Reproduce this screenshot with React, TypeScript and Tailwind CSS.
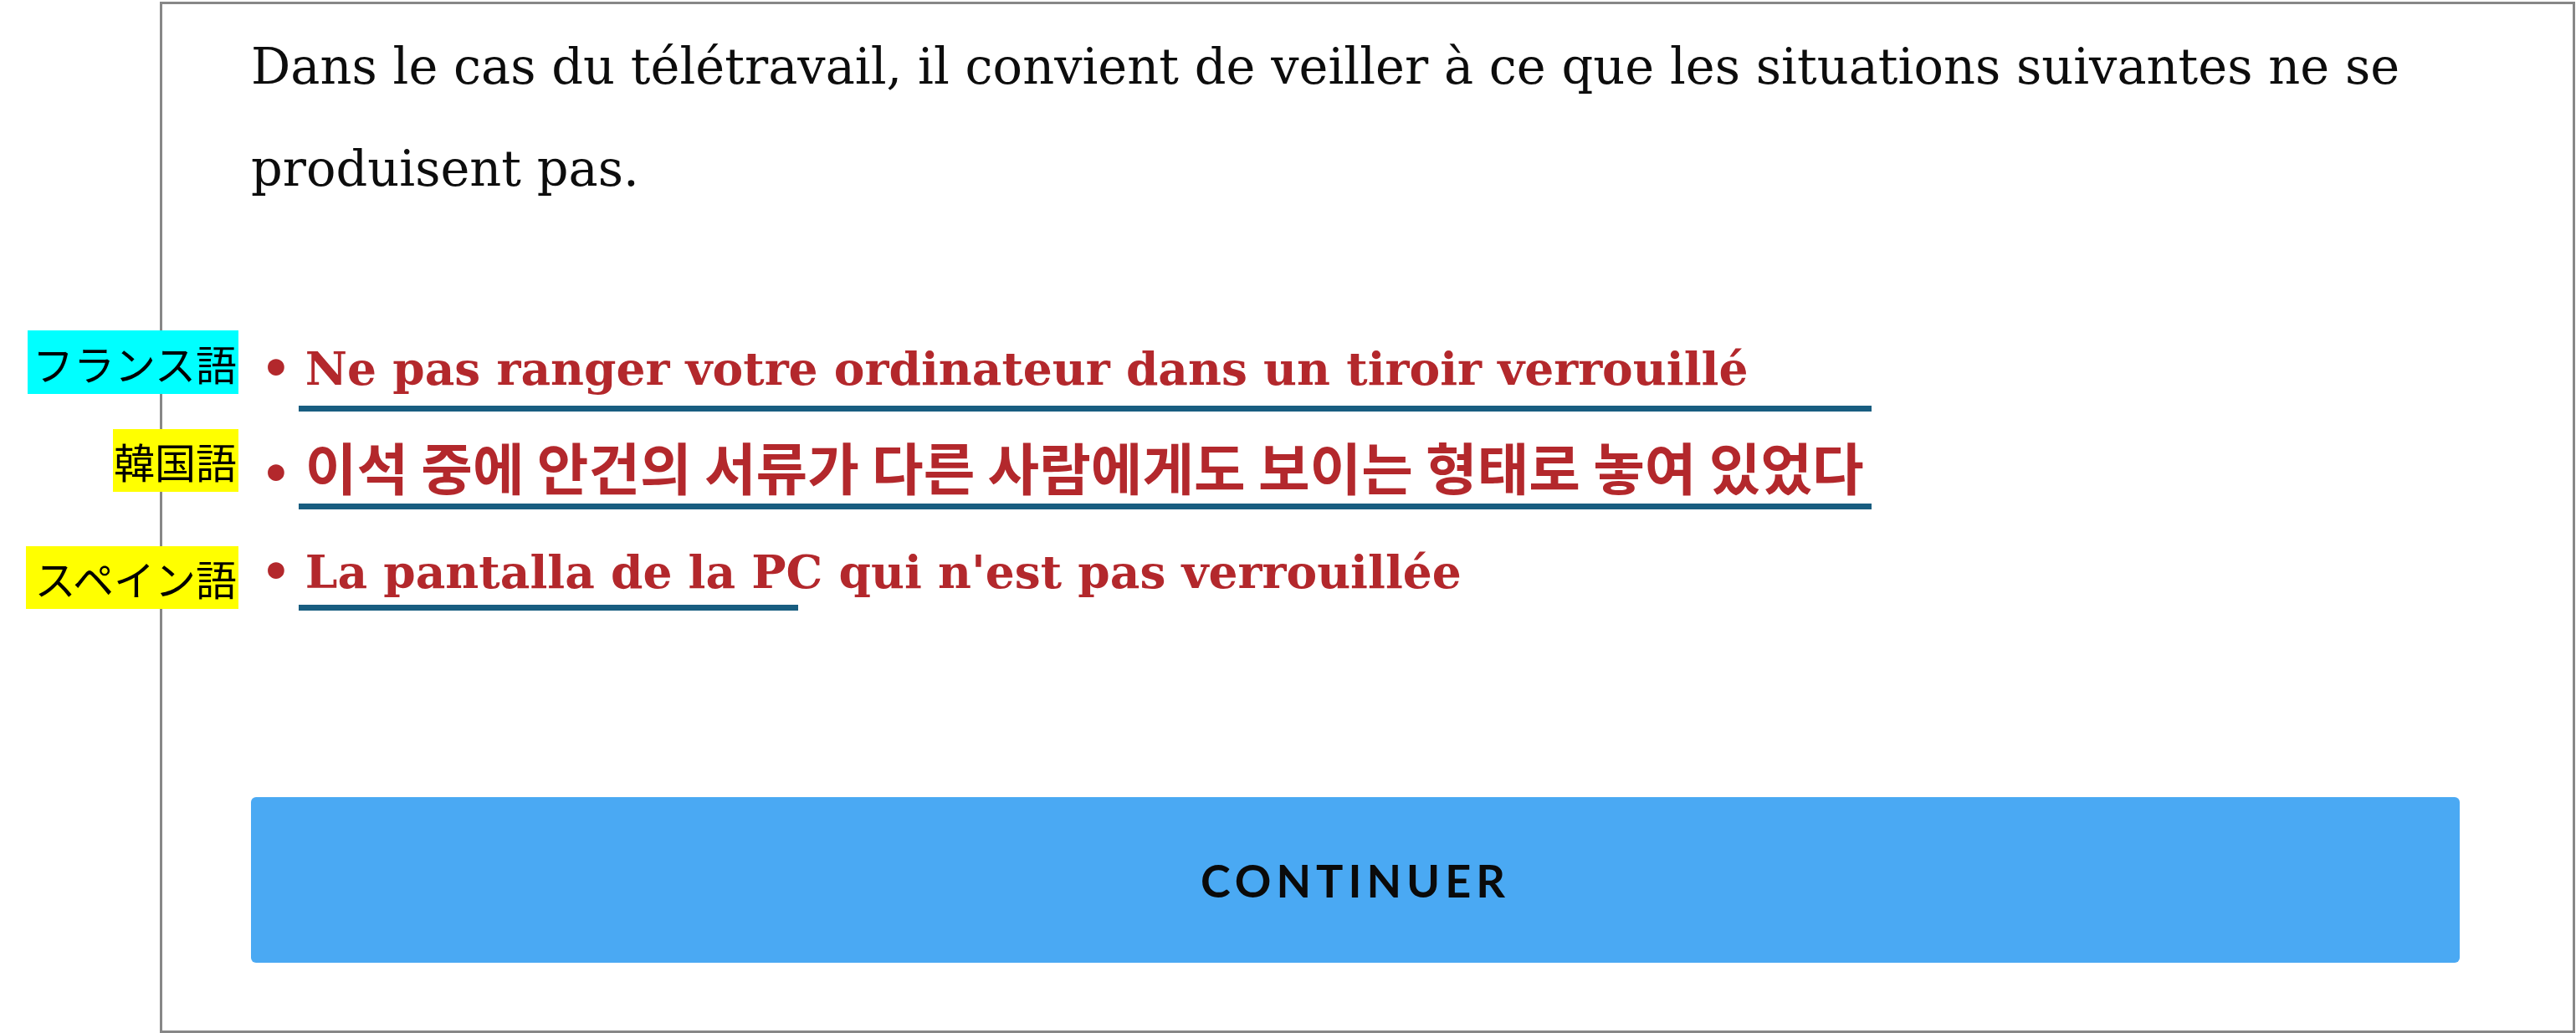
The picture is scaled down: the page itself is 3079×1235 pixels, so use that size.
import React from "react";

type Item = {
  text: string;
  lang: string;
  labelBg: string;
  labelClass: string;
  underlineClass: string;
  korean?: boolean;
  height: string;
};

const items: Item[] = [
  {
    text: "Ne pas ranger votre ordinateur dans un tiroir verrouillé",
    lang: "フランス語",
    labelBg: "bg-[#00ffff]",
    labelClass: "top-[16px] h-[76px] w-[252px]",
    underlineClass: "top-[106px] w-[1880px]",
    height: "h-[125px]",
  },
  {
    text: "이석 중에 안건의 서류가 다른 사람에게도 보이는 형태로 놓여 있었다",
    lang: "韓国語",
    labelBg: "bg-[#ffff00]",
    labelClass: "top-[9px] h-[75px] w-[150px]",
    underlineClass: "top-[98px] w-[1880px]",
    korean: true,
    height: "h-[118px]",
  },
  {
    text: "La pantalla de la PC qui n'est pas verrouillée",
    lang: "スペイン語",
    labelBg: "bg-[#ffff00]",
    labelClass: "top-[31px] h-[75px] w-[254px]",
    underlineClass: "top-[101px] w-[597px]",
    height: "h-[122px]",
  },
];

function Bullet({ text, lang, labelBg, labelClass, underlineClass, korean, height }: Item) {
  return (
    <li className={`relative flex items-baseline ${height} leading-[122px] text-[#b3282c]`}>
      <span className="ml-[12px] font-['DejaVu_Serif'] text-[56px] font-bold">•</span>
      <span
        className={
          korean
            ? "ml-[17px] font-['Noto_Sans_CJK_KR',sans-serif] text-[67px] leading-[106px] font-bold"
            : "ml-[17px] font-['DejaVu_Serif',serif] text-[55px] font-bold"
        }
      >
        {text}
      </span>
      {/* annotation: language tag over the card edge */}
      <span
        className={`absolute right-full mr-[15px] flex items-center justify-end pr-[2px] ${labelClass} ${labelBg} font-['Noto_Sans_CJK_JP',sans-serif] text-[49px] leading-none text-black`}
      >
        {lang}
      </span>
      {/* annotation: length marker */}
      <span className={`absolute left-[57px] h-[7px] bg-[#185d80] ${underlineClass}`} />
    </li>
  );
}

export default function App() {
  return (
    <div className="w-[3079px] h-[1235px] overflow-hidden bg-white">
      <div className="ml-[191px] mt-[2px] w-[2887px] h-[1233px] border-[3px] border-[#878787] pl-[106px] pr-[132px] pt-[14px]">
        <p className="font-['DejaVu_Serif',serif] text-[59px] leading-[122px] text-[#0d0d0d]">
          Dans le cas du télétravail, il convient de veiller à ce que les situations suivantes ne se produisent pas.
        </p>
        <ul className="mt-[116px]">
          {items.map((it, i) => (
            <Bullet key={i} {...it} />
          ))}
        </ul>
        <button className="mt-[209px] flex h-[198px] w-[2640px] items-center justify-center rounded-[6px] bg-[#4aa9f3]">
          <span className="font-['Lato',sans-serif] text-[54px] font-bold tracking-[6px] text-[#0a0a0a]">CONTINUER</span>
        </button>
      </div>
    </div>
  );
}
